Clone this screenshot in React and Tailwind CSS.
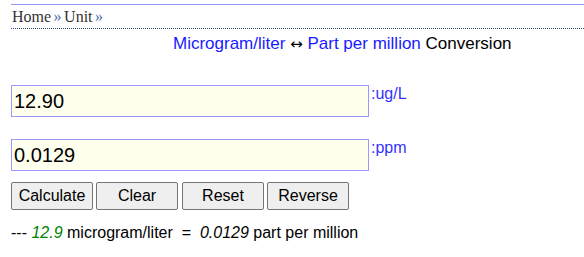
import React from 'react';

const arial = { fontFamily: '"Liberation Sans", Arial, sans-serif' };

const buttons = [
  { label: 'Calculate', cls: 'ml-0' },
  { label: 'Clear', cls: 'ml-[3px]' },
  { label: 'Reset', cls: 'ml-[4px]' },
  { label: 'Reverse', cls: 'ml-[3px]' },
];

export default function App() {
  return (
    <div className="w-[584px] h-[257px] overflow-hidden bg-white text-black" style={arial}>
      <div className="ml-[11px]">
        {/* top rule */}
        <div className="h-[5px] border-b border-[#9999ff]" />

        {/* Breadcrumb */}
        <div
          className="h-[24px] pt-[3px] pl-[1px] text-[16px] leading-[18px] text-[#333] [word-spacing:-1.5px] border-b border-dotted border-[#1f4f7f]"
          style={{ fontFamily: '"Liberation Serif", "Times New Roman", serif' }}
        >
          Home <span className="text-[#4a6fa5]">»</span> Unit <span className="text-[#4a6fa5]">»</span>
        </div>

        {/* Title */}
        <div className="pl-[162px] pt-[5px] text-[17px] leading-[20px]">
          <span className="text-[#1a1aff]">Microgram/liter</span>{' '}
          <span className="text-[15px]" style={{ fontFamily: '"DejaVu Sans", sans-serif' }}>↔</span>{' '}
          <span className="text-[#1a1aff]">Part per million</span> Conversion
        </div>

        {/* Inputs */}
        <div className="mt-[31px] flex items-start">
          <input
            defaultValue="12.90"
            className="w-[358px] h-[32px] px-[2px] bg-[#ffffee] border border-[#9999ff] text-[20px] outline-none"
            style={arial}
          />
          <span className="ml-[2px] text-[16px] leading-[18px] text-[#3333ff]">:ug/L</span>
        </div>
        <div className="mt-[22px] flex items-start">
          <input
            defaultValue="0.0129"
            className="w-[358px] h-[32px] px-[2px] bg-[#ffffee] border border-[#9999ff] text-[20px] outline-none"
            style={arial}
          />
          <span className="ml-[2px] text-[16px] leading-[18px] text-[#3333ff]">:ppm</span>
        </div>

        {/* Buttons */}
        <div className="mt-[11px] flex">
          {buttons.map((b) => (
            <button
              key={b.label}
              className={`${b.cls} w-[82px] h-[28px] bg-[#efefef] border border-[#767676] rounded-[2px] text-[16px] text-black`}
              style={arial}
            >
              {b.label}
            </button>
          ))}
        </div>

        {/* Result */}
        <div className="mt-[13px] text-[16px] leading-[20px] whitespace-pre">
          {'--- '}
          <i className="text-[#008000]">12.9</i>
          {' microgram/liter  =  '}
          <i>0.0129</i>
          {' part per million'}
        </div>
      </div>
    </div>
  );
}
